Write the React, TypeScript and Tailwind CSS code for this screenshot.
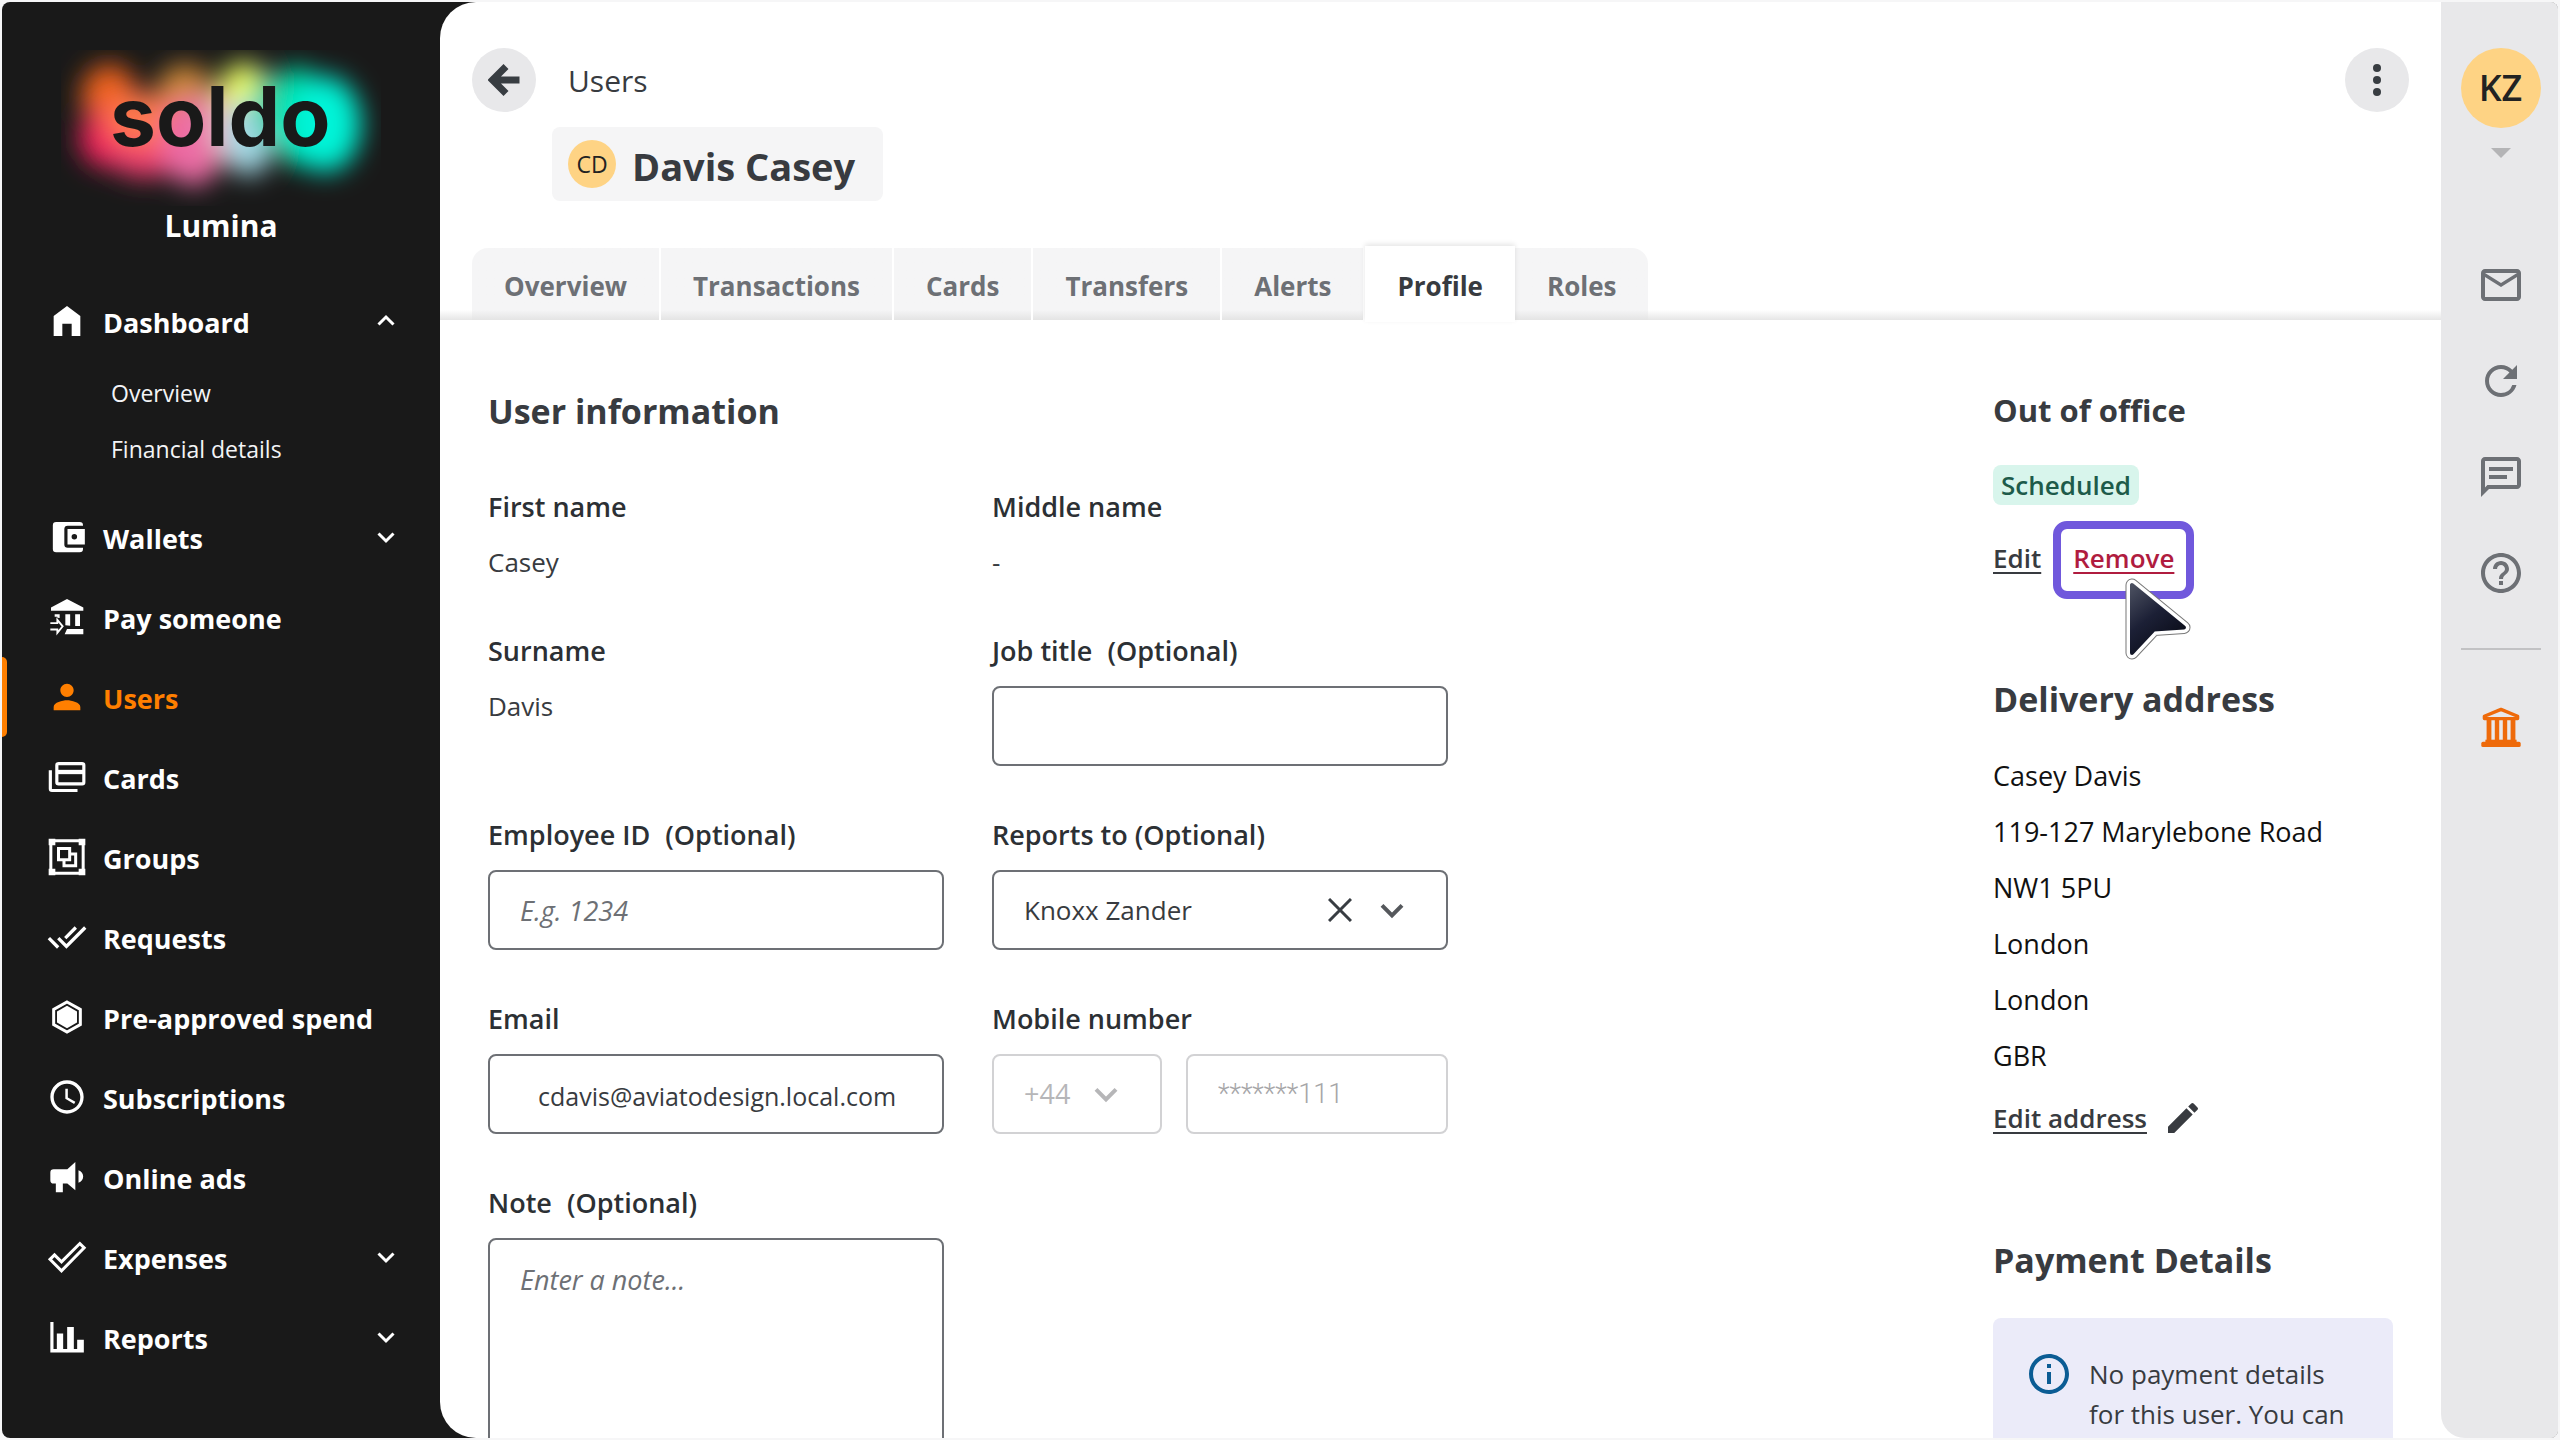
import type { ReactNode } from "react";
import {
  MdAccessTime,
  MdDoneAll,
  MdEdit,
  MdHelpOutline,
  MdInfoOutline,
  MdMailOutline,
  MdPerson,
  MdRefresh,
} from "react-icons/md";

type IconProps = { className?: string };

function Svg({ className, children }: { className?: string; children: ReactNode }) {
  return (
    <svg viewBox="0 0 24 24" fill="currentColor" className={className} aria-hidden="true">
      {children}
    </svg>
  );
}

function HomeIcon({ className }: IconProps) {
  return (
    <Svg className={className}>
      <path d="M4 21V9l8-6 8 6v12h-5.2v-7.4H9.2V21z" />
    </Svg>
  );
}

function WalletIcon({ className }: IconProps) {
  return (
    <Svg className={className}>
      <path d="M21.6 5.2V5a2 2 0 0 0-2-2H5.500a2 2 0 0 0-2 2v14.200a2 2 0 0 0 2 2h14.100a2 2 0 0 0 2-2v-.7H12.400a2 2 0 0 1-2-2V7.200a2 2 0 0 1 2-2z" />
      <path
        fillRule="evenodd"
        d="M12.300 7.200v9.300h10.400V7.200zm4.100 6.300a1.650 1.650 0 1 1 0-3.300 1.650 1.650 0 0 1 0 3.300z"
      />
    </Svg>
  );
}

function PayIcon({ className }: IconProps) {
  return (
    <Svg className={className}>
      <path d="M12 1.200 21.800 6.300V8.200H2.400V6.300zM4.600 10.400h3v2.200l-1.400-.1v-.7H4.600zM11 10.400h2.900v6.800l-2.900-.2zM16.900 10.400h2.900v7h-2.900zM12 19.200h9.800V22.300H10.600z" />
      <path
        d="M2 15.700h4.200v-2l3.200 3.900-3.200 3.900v-2H2"
        fill="none"
        stroke="currentColor"
        strokeWidth="1.100"
      />
    </Svg>
  );
}

function CardsIcon({ className }: IconProps) {
  return (
    <Svg className={className}>
      <g fill="none" stroke="currentColor" strokeWidth="1.900">
        <rect x="5.900" y="4" width="16.200" height="12.100" rx="1" />
        <path d="M2 8v11.100a1 1 0 0 0 1 1h15.300" />
        <path d="M6 9h16" strokeWidth="2.600" />
      </g>
    </Svg>
  );
}

function GroupIcon({ className }: IconProps) {
  return (
    <Svg className={className}>
      <path d="M1 1h4v4H1zM19 1h4v4h-4zM1 19h4v4H1zM19 19h4v4h-4z" />
      <g fill="none" stroke="currentColor" strokeWidth="1.800">
        <path d="M3 2.300h18M3 21.700h18M2.300 3v18M21.700 3v18" />
        <path d="M6.900 6.900h6.700v6.700H6.900z" />
        <path d="M14 10.200h3.200v7h-7V14" />
      </g>
    </Svg>
  );
}

function HexIcon({ className }: IconProps) {
  return (
    <Svg className={className}>
      <path
        d="M12 3 20 7.500v9L12 21l-8-4.500v-9z"
        fill="none"
        stroke="currentColor"
        strokeWidth="1.800"
      />
      <path d="M12 5.300 18 8.700v6.600L12 18.700 6 15.300V8.700z" />
    </Svg>
  );
}

function MegaphoneIcon({ className }: IconProps) {
  return (
    <Svg className={className}>
      <path d="M17 3v17L12.200 15.900H9.500v5.200H5.300v-5.200H4a2 2 0 0 1-2-2V9.400a2 2 0 0 1 2-2h8.200zM18.900 8c1.800.6 2.800 2 2.800 3.700s-1 3.100-2.800 3.700z" />
    </Svg>
  );
}

function CheckOutlineIcon({ className }: IconProps) {
  return (
    <Svg className={className}>
      <path
        d="M1.800 13.400 4.500 10.700l4.200 4.200L19.700 3.900l2.600 2.600L8.700 20.300z"
        fill="none"
        stroke="currentColor"
        strokeWidth="1.800"
      />
    </Svg>
  );
}

function ReportsIcon({ className }: IconProps) {
  return (
    <Svg className={className}>
      <path d="M2 3h1.900v16.200h2V9.900h3.800v9.300h2.400V6h4v13.200h2v-5.500h4V21.300H2z" />
    </Svg>
  );
}

function ChatIcon({ className }: IconProps) {
  return (
    <Svg className={className}>
      <path d="M20 2H4c-1.100 0-2 .9-2 2v18l4-4h14c1.100 0 2-.9 2-2V4c0-1.100-.9-2-2-2zm0 14H5.200L4 17.200V4h16zM6 7h12v2H6zM6 11h9v2H6z" />
    </Svg>
  );
}

function BankIcon({ className }: IconProps) {
  return (
    <Svg className={className}>
      <g fill="none" stroke="currentColor" strokeWidth="1.700" strokeLinejoin="round">
        <path d="M12 3.200 3.700 6.600v1.200h16.600V6.600z" />
        <path d="M3 21.200h18v-1H3z" />
        <path d="M4.200 19.200h15.600" />
      </g>
      <path d="M4.800 8.500h2.400v10.600H4.800zM8.900 8.500h2.200v10.600H8.900zM12.900 8.500h2.200v10.600h-2.200zM16.800 8.500h2.400v10.600h-2.400z" />
    </Svg>
  );
}

function Chevron({ className }: IconProps) {
  return (
    <svg viewBox="0 0 24 24" fill="none" className={className} aria-hidden="true">
      <path d="m4.500 8.500 7.500 7.500 7.500-7.500" stroke="currentColor" strokeWidth="3" />
    </svg>
  );
}

function Logo() {
  return (
    <svg viewBox="0 0 320 156" className="h-[156px] w-[320px]" role="img" aria-label="soldo">
      <defs>
        <filter id="soft" x="-50%" y="-50%" width="200%" height="200%">
          <feGaussianBlur stdDeviation="13" />
        </filter>
      </defs>
      <g filter="url(#soft)">
        <ellipse cx="48" cy="46" rx="28" ry="32" fill="#f0641e" />
        <ellipse cx="124" cy="42" rx="28" ry="28" fill="#d08a38" />
        <ellipse cx="46" cy="88" rx="28" ry="30" fill="#f0205c" />
        <ellipse cx="84" cy="104" rx="36" ry="24" fill="#f03c70" />
        <ellipse cx="84" cy="70" rx="40" ry="26" fill="#ff7850" />
        <ellipse cx="132" cy="92" rx="32" ry="44" fill="#ec6ca4" />
        <ellipse cx="172" cy="72" rx="26" ry="42" fill="#e4b4bc" />
        <ellipse cx="182" cy="38" rx="22" ry="26" fill="#eeff60" />
        <ellipse cx="188" cy="88" rx="24" ry="38" fill="#a4dce8" />
        <ellipse cx="206" cy="54" rx="14" ry="34" fill="#38c8a0" />
        <ellipse cx="236" cy="66" rx="26" ry="50" fill="#00dca4" />
        <ellipse cx="264" cy="74" rx="36" ry="48" fill="#00f4d8" />
      </g>
      <text
        x="49"
        y="96"
        fill="#191919"
        className="font-['Inter',sans-serif] text-[82px] font-bold"
      >
        soldo
      </text>
    </svg>
  );
}

const navIcon = "size-10 shrink-0";

const mainNav = [
  { label: "Wallets", icon: <WalletIcon className={navIcon} />, expandable: true },
  { label: "Pay someone", icon: <PayIcon className={navIcon} /> },
  { label: "Users", icon: <MdPerson className={navIcon} />, active: true },
  { label: "Cards", icon: <CardsIcon className={navIcon} /> },
  { label: "Groups", icon: <GroupIcon className={navIcon} /> },
  { label: "Requests", icon: <MdDoneAll className={navIcon} /> },
  { label: "Pre-approved spend", icon: <HexIcon className={navIcon} /> },
  { label: "Subscriptions", icon: <MdAccessTime className={navIcon} /> },
  { label: "Online ads", icon: <MegaphoneIcon className={navIcon} /> },
  { label: "Expenses", icon: <CheckOutlineIcon className={navIcon} />, expandable: true },
  { label: "Reports", icon: <ReportsIcon className={navIcon} />, expandable: true },
];

const tabs = ["Overview", "Transactions", "Cards", "Transfers", "Alerts", "Profile", "Roles"];

const address = ["Casey Davis", "119-127 Marylebone Road", "NW1 5PU", "London", "London", "GBR"];

function Sidebar() {
  return (
    <aside className="w-[438px] shrink-0 text-white">
      <div className="flex flex-col items-center pt-12">
        <Logo />
        <p className="text-[30px] leading-10 font-bold">Lumina</p>
      </div>

      <nav className="mt-[35px] text-[27px] font-bold">
        <a href="#dashboard" className="flex h-20 items-center gap-4 pr-[42px] pl-[45px]">
          <HomeIcon className={navIcon} />
          <span className="flex-1 pt-1">Dashboard</span>
          <Chevron className="size-6 rotate-180" />
        </a>
        <div className="mt-1 mb-5 flex flex-col pl-[109px] text-[23px] font-normal text-gray-100">
          <a href="#overview" className="leading-[56px]">Overview</a>
          <a href="#financial" className="leading-[56px]">Financial details</a>
        </div>

        {mainNav.map((item) => (
          <a
            key={item.label}
            href="#nav"
            className={`relative flex h-20 items-center gap-4 pr-[42px] pl-[45px] ${item.active ? "text-[#ff7f00]" : ""}`}
          >
            {item.active && <span className="absolute inset-y-0 left-0 w-[5px] rounded-r-lg bg-[#ff7f00]" />}
            {item.icon}
            <span className="flex-1 pt-1">{item.label}</span>
            {item.expandable && <Chevron className="size-6" />}
          </a>
        ))}
      </nav>
    </aside>
  );
}

function PageHeader() {
  return (
    <header className="shrink-0">
      <div className="flex items-start justify-between pt-[46px] pr-8 pl-8">
        <div className="flex gap-4">
          <button aria-label="Back" className="flex size-16 items-center justify-center rounded-full bg-[#e8e8ea]">
            <svg viewBox="0 0 32 32" fill="none" className="size-8">
              <path d="M31.500 16H5M18 2.500 4.500 16 18 29.500" stroke="#383d42" strokeWidth="7" />
            </svg>
          </button>
          <div>
            <a href="#users" className="block pl-4 text-[30px] leading-[66px] font-medium">Users</a>
            <div className="mt-[13px] flex h-[74px] items-center gap-4 rounded-lg bg-[#f5f5f6] px-4 pr-7">
              <span className="flex size-12 items-center justify-center rounded-full bg-[#fed384] text-[23px] font-medium text-[#222]">
                CD
              </span>
              <h1 className="pt-1 text-[38px] font-bold">Davis Casey</h1>
            </div>
          </div>
        </div>
        <button aria-label="More" className="flex size-16 items-center justify-center rounded-full bg-[#e8e8ea]">
          <svg viewBox="0 0 32 32" fill="#383d42" className="size-8">
            <circle cx="16" cy="4" r="4" />
            <circle cx="16" cy="16" r="4" />
            <circle cx="16" cy="28" r="4" />
          </svg>
        </button>
      </div>

      <div className="mt-[47px] flex bg-linear-to-t from-[#e6e6e6] from-0% via-transparent via-[10px] pl-8">
        {tabs.map((tab) => (
          <button
            key={tab}
            className={
              tab === "Profile"
                ? "relative -my-[2px] h-[76px] bg-white px-8 pt-1 text-[26px] font-bold shadow-[0_-2px_5px_rgba(0,0,0,0.1)]"
                : "h-[72px] border-r-2 border-white bg-linear-to-t from-[#e4e4e4] to-[#f5f5f6] to-[10px] px-8 pt-1 text-[26px] font-bold text-[#6d7075] first:rounded-tl-2xl last:rounded-tr-2xl last:border-r-0"
            }
          >
            {tab}
          </button>
        ))}
      </div>
    </header>
  );
}

const label = "block text-[27px] leading-[38px] font-semibold text-[#2c3034]";
const value = "mt-4 text-[26px] leading-10";
const box = "h-20 w-full rounded-lg border-2 bg-transparent px-[30px]";

function ProfileForm() {
  return (
    <section className="w-[960px]">
      <h2 className="text-[34px] leading-[48px] font-bold">User information</h2>
      <form className="mt-[53px] grid grid-cols-2 gap-x-12 gap-y-[50px]">
        <div>
          <p className={label}>First name</p>
          <p className={value}>Casey</p>
        </div>
        <div>
          <p className={label}>Middle name</p>
          <p className={value}>-</p>
        </div>
        <div>
          <p className={label}>Surname</p>
          <p className={value}>Davis</p>
        </div>
        <div>
          <label htmlFor="job" className={label}>
            Job title <span className="ml-2">(Optional)</span>
          </label>
          <input id="job" className={`${box} mt-4 border-[#6d7075] text-[26px]`} />
        </div>
        <div>
          <label htmlFor="employee" className={label}>
            Employee ID <span className="ml-2">(Optional)</span>
          </label>
          <input
            id="employee"
            placeholder="E.g. 1234"
            className={`${box} mt-4 border-[#6d7075] text-[27px] placeholder:text-[#6d7075] placeholder:italic`}
          />
        </div>
        <div>
          <label htmlFor="reports" className={label}>Reports to (Optional)</label>
          <div className="relative mt-4">
            <select id="reports" className={`${box} appearance-none border-[#6d7075] text-[26px]`}>
              <option>Knoxx Zander</option>
            </select>
            <div className="pointer-events-none absolute inset-y-0 right-10 flex items-center gap-6">
              <button type="button" aria-label="Clear" className="pointer-events-auto">
                <svg viewBox="0 0 24 24" fill="none" className="size-6">
                  <path d="m1 1 22 22M23 1 1 23" stroke="#383d42" strokeWidth="3" />
                </svg>
              </button>
              <Chevron className="size-8 text-[#55585c]" />
            </div>
          </div>
        </div>
        <div>
          <label htmlFor="email" className={label}>Email</label>
          <input
            id="email"
            type="email"
            defaultValue="cdavis@aviatodesign.local.com"
            className="mt-4 h-20 w-full rounded-lg border-2 border-[#6d7075] pt-1 pl-12 text-[25px]"
          />
        </div>
        <div>
          <label htmlFor="mobile" className={label}>Mobile number</label>
          <div className="mt-4 flex gap-6">
            <div className="relative w-[170px]">
              <select
                aria-label="Country code"
                disabled
                className={`${box} appearance-none border-[#d2d2d4] text-[27px] text-[#b6b6b8] opacity-100`}
              >
                <option>+44</option>
              </select>
              <Chevron className="absolute top-6 right-10 size-8 text-[#b6b6b8]" />
            </div>
            <div className="flex-1">
              <input
                id="mobile"
                disabled
                defaultValue="*******111"
                className={`${box} border-[#d2d2d4] font-['Roboto',sans-serif] text-[27px] font-light text-[#a6a6a8]`}
              />
            </div>
          </div>
        </div>
        <div>
          <label htmlFor="note" className={label}>
            Note <span className="ml-2">(Optional)</span>
          </label>
          <textarea
            id="note"
            rows={6}
            placeholder="Enter a note..."
            className="mt-4 w-full resize-none rounded-lg border-2 border-[#6d7075] px-[30px] py-5 text-[27px] placeholder:text-[#6d7075] placeholder:italic"
          />
        </div>
      </form>
    </section>
  );
}

function Cursor() {
  return (
    <svg viewBox="0 0 66 82" className="absolute top-[49px] left-16 h-[82px] w-[66px]" aria-hidden="true">
      <defs>
        <linearGradient id="arrow" x1="0" y1="0" x2="0.600" y2="1">
          <stop offset="0" stopColor="#4b5060" />
          <stop offset="0.500" stopColor="#1c2036" />
          <stop offset="1" stopColor="#0a0c18" />
        </linearGradient>
      </defs>
      <g strokeLinejoin="round">
        <path d="M7 7v68l22-23.500 30-2z" fill="#777" stroke="#777" strokeWidth="13" />
        <path d="M7 7v68l22-23.500 30-2z" fill="#fff" stroke="#fff" strokeWidth="11" />
        <path d="M7 7v68l22-23.500 30-2z" fill="url(#arrow)" stroke="url(#arrow)" strokeWidth="4" />
      </g>
    </svg>
  );
}

function SidePanel() {
  return (
    <section className="w-[400px]">
      <h2 className="text-[31px] leading-[46px] font-bold">Out of office</h2>
      <span className="mt-8 inline-block rounded-lg bg-[#d8f5ec] px-2 text-[26px] leading-10 font-semibold text-[#1d5b4a]">
        Scheduled
      </span>
      <div className="mt-4 flex items-center gap-3 text-[26px] font-semibold">
        <a href="#edit" className="pb-1 underline underline-offset-4">Edit</a>
        <div className="relative rounded-[14px] border-8 border-[#7058dc] px-3 pb-1">
          <a href="#remove" className="leading-[58px] text-[#b01c3f] underline underline-offset-4">Remove</a>
          <Cursor />
        </div>
      </div>

      <h2 className="mt-[76px] text-[34px] leading-[48px] font-bold">Delivery address</h2>
      <address className="mt-[25px] text-[27px] text-[#111] not-italic">
        {address.map((line, i) => (
          <p key={i} className="leading-[56px]">{line}</p>
        ))}
      </address>
      <div className="mt-[14px] flex items-center gap-4">
        <a href="#edit-address" className="text-[26px] font-semibold underline underline-offset-4">Edit address</a>
        <MdEdit className="size-10" />
      </div>

      <h2 className="mt-[98px] text-[34px] leading-[48px] font-bold">Payment Details</h2>
      <div className="mt-[34px] flex gap-4 rounded-lg bg-[#ebebf9] p-8">
        <MdInfoOutline className="size-12 shrink-0 text-[#0b5c94]" />
        <p className="pt-1 text-[26px] leading-10">No payment details for this user. You can</p>
      </div>
    </section>
  );
}

function RightRail() {
  return (
    <aside className="w-[117px] shrink-0 bg-white">
      <div className="flex h-full flex-col items-center rounded-bl-3xl bg-[#e8e8ea] pt-[46px] pl-[2px] text-[#6d7075]">
        <button className="flex size-20 items-center justify-center rounded-full bg-[#fed384] text-[36px] font-semibold text-[#222]">
          KZ
        </button>
        <svg viewBox="0 0 20 10" className="mt-5 h-[10px] w-5 fill-[#b4b4b6]">
          <path d="M0 0h20L10 10z" />
        </svg>
        <div className="mt-[103px] flex flex-col gap-12">
          <button aria-label="Messages"><MdMailOutline className="size-12" /></button>
          <button aria-label="Refresh"><MdRefresh className="size-12" /></button>
          <button aria-label="Chat"><ChatIcon className="size-12" /></button>
          <button aria-label="Help"><MdHelpOutline className="size-12" /></button>
        </div>
        <hr className="mt-[51px] w-20 border-t-2 border-[#c2c2c4]" />
        <button aria-label="Bank" className="mt-[53px] text-[#ee6a0a]"><BankIcon className="size-12" /></button>
      </div>
    </aside>
  );
}

export default function App() {
  return (
    <div className="h-screen bg-[#f6f6f7] p-[2px] font-['Open_Sans','Noto_Sans',sans-serif] text-[#383b40]">
      <div className="flex h-full overflow-hidden rounded-lg bg-[#191919]">
        <Sidebar />
        <main className="flex min-w-0 flex-1 flex-col overflow-hidden rounded-l-[36px] bg-white">
          <PageHeader />
          <div className="flex min-h-0 flex-1 justify-between overflow-hidden px-12 pt-[67px]">
            <ProfileForm />
            <SidePanel />
          </div>
        </main>
        <RightRail />
      </div>
    </div>
  );
}
